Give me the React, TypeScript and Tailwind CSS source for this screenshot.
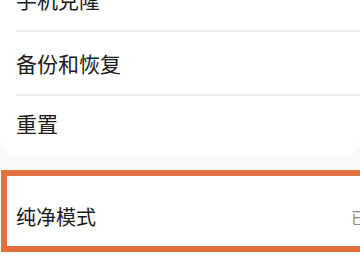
import React from 'react';

const rows = ['手机克隆', '备份和恢复', '重置'];

const App: React.FC = () => {
    return (
        <div
            className="w-[360px] h-[264px] overflow-hidden bg-[#f9f9f9] text-[#1a1a1a]"
            style={{ fontFamily: '"Noto Sans CJK SC", "Noto Sans", sans-serif' }}
        >
            {/* Top card */}
            <div className="-mt-[32px] bg-white rounded-b-[18px]">
                {rows.map((label, i) => (
                    <div key={label} className="pl-4">
                        <div
                            className={`flex items-center text-[21px] leading-none ${i === 2 ? 'h-[60px] pb-[6px]' : 'h-[64px] border-b-2 border-[#efefef]'}`}
                        >
                            {label}
                        </div>
                    </div>
                ))}
            </div>

            {/* Highlighted row */}
            <div className="mt-[14px] ml-[1px] w-[370px] h-[82px] border-[6px] border-[#e2703f] bg-white">
                <div className="flex items-center justify-between h-full pt-[12px] pl-[9px]">
                    <span className="text-[20px] leading-none">纯净模式</span>
                    <span className="text-[16px] leading-none text-[#8a8a8a] mr-[-6px] w-[20px] overflow-hidden whitespace-nowrap">已开启</span>
                </div>
            </div>

            <div className="h-[12px] bg-white" />
        </div>
    );
};

export default App;
